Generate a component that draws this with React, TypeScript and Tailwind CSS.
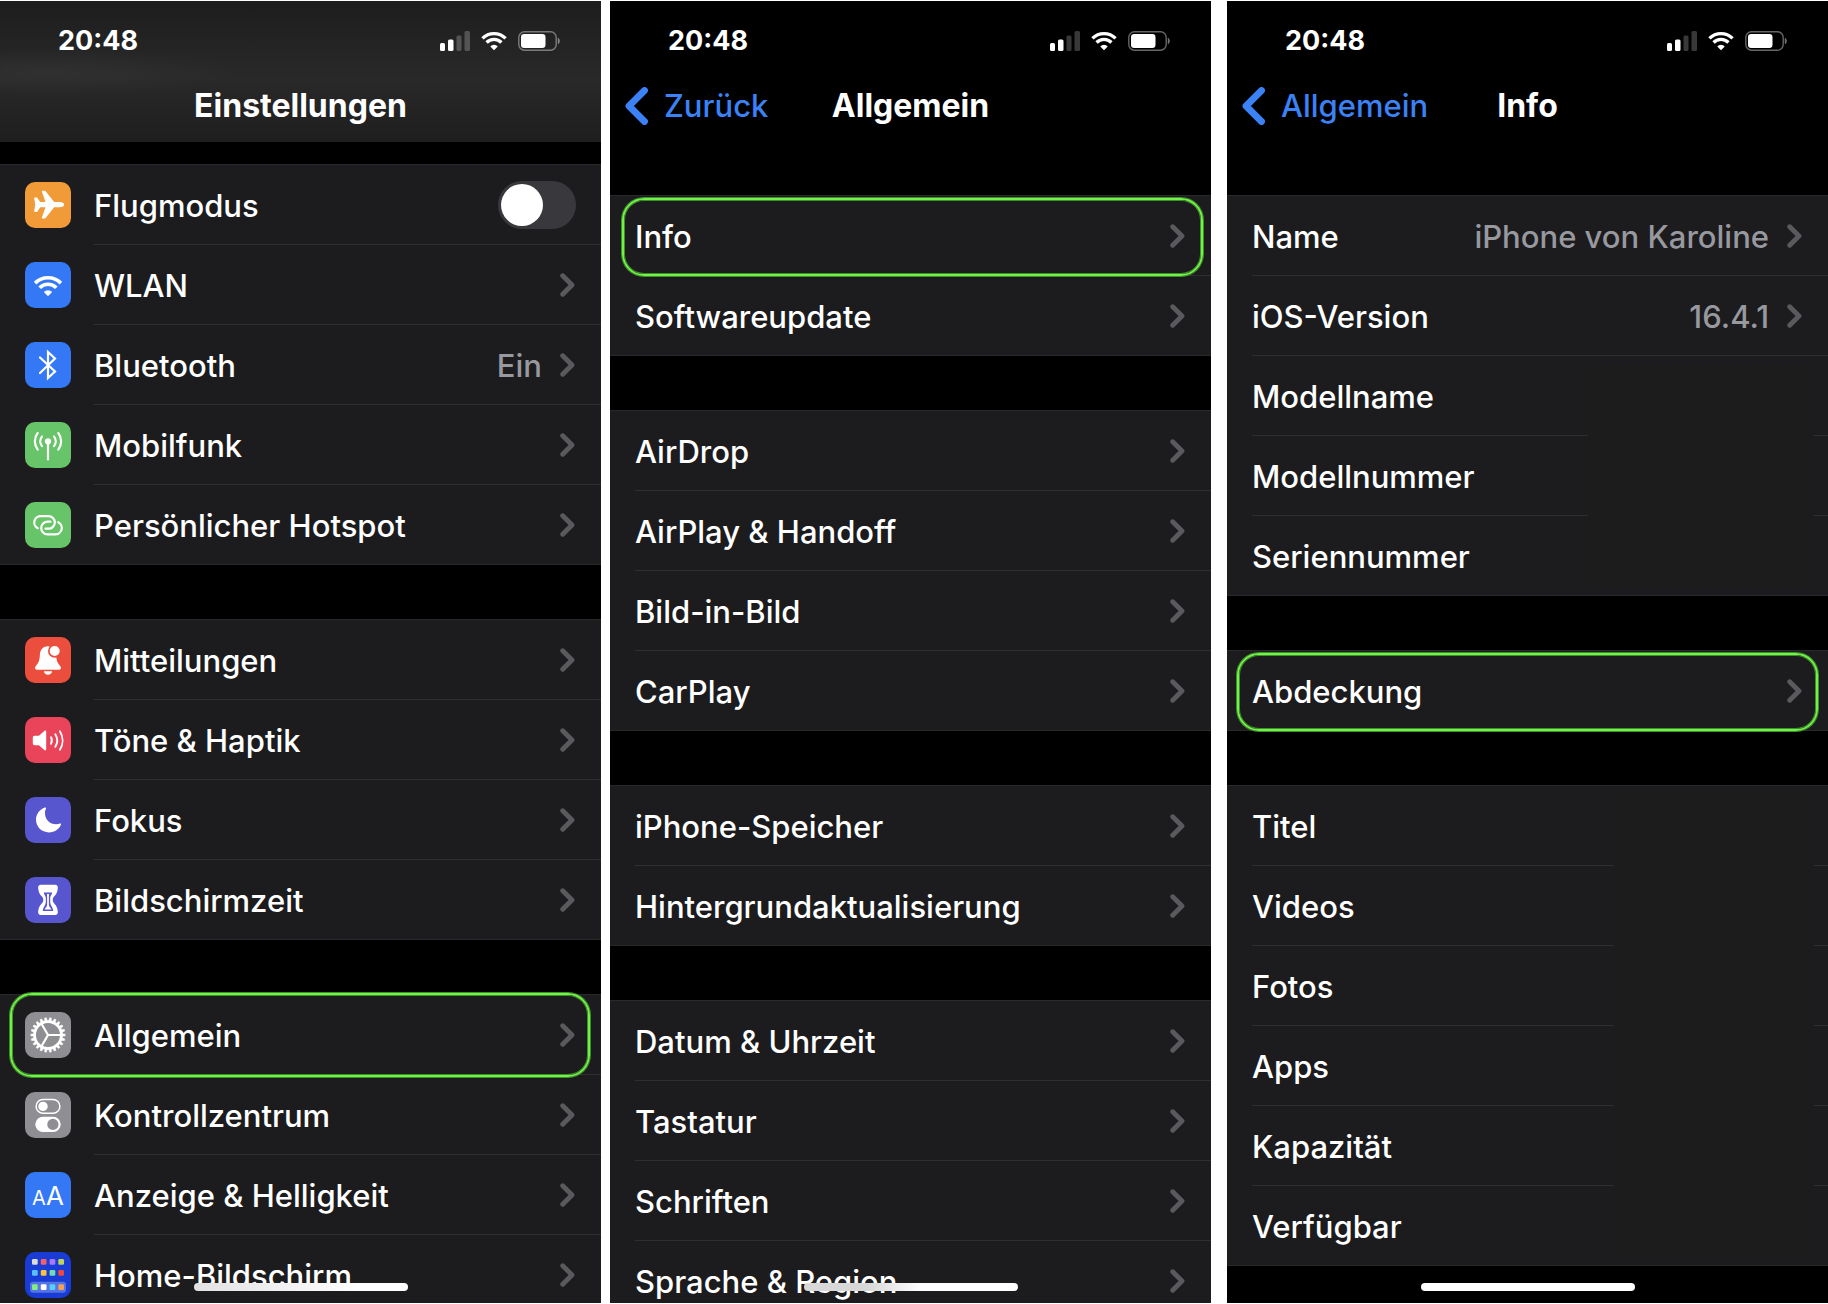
import type { ReactNode } from "react";

type RowData = {
  label: string;
  value?: string;
  icon?: ReactNode;
  toggle?: boolean;
  plain?: boolean;
  highlight?: string;
};

function Tile({ bg, children }: { bg: string; children: ReactNode }) {
  return (
    <svg viewBox="0 0 46 46" className={`size-[46px] shrink-0 rounded-[10px] ${bg}`} aria-hidden="true">
      {children}
    </svg>
  );
}

function WifiShape() {
  return (
    <g>
      <g fill="none" stroke="#fff" strokeWidth="3.7">
        <path d="M10.1 21.1a18.2 18.2 0 0 1 25.8 0" />
        <path d="M14.7 25.7a11.7 11.7 0 0 1 16.6 0" />
      </g>
      <path d="M23 34.3l-4.2-4.3a6 6 0 0 1 8.4 0z" fill="#fff" />
    </g>
  );
}

const planeIcon = (
  <Tile bg="bg-[#f19b38]">
    <path
      fill="#fff"
      d="M39.2 22.6c0 1.8-2 2.7-4.4 2.7h-5.6L20.6 36c-.4.5-.8.6-1.3.6h-1.7c-.6 0-.9-.5-.7-1.1l3.6-10.2h-5.2l-2.9 4.1c-.3.4-.6.5-1 .5h-1.5c-.5 0-.8-.4-.7-.9l1-6.4-1-6.3c-.1-.5.2-.9.7-.9h1.5c.4 0 .7.1 1 .5l2.9 4h5.2L16.9 9.8c-.2-.6.1-1.1.7-1.1h1.7c.5 0 .9.1 1.300.6l8.600 10.600h5.600c2.400 0 4.400.900 4.400 2.700z"
    />
  </Tile>
);

const wifiIcon = (
  <Tile bg="bg-[#3478f6]">
    <WifiShape />
  </Tile>
);

const bluetoothIcon = (
  <Tile bg="bg-[#3478f6]">
    <path
      d="M15 15.500L30 29.500L23 36V10L30 16.500L15 31"
      fill="none"
      stroke="#fff"
      strokeWidth="2.200"
      strokeLinejoin="miter"
      strokeLinecap="round"
    />
  </Tile>
);

const cellularIcon = (
  <Tile bg="bg-[#67c468]">
    <circle cx="23" cy="19.300" r="3.100" fill="#fff" />
    <g fill="none" stroke="#fff" strokeWidth="2.200" strokeLinecap="round">
      <path d="M23 20v17.500" />
      <path d="M17 14.500a7.500 7.500 0 0 0 0 9.600M29 14.500a7.500 7.500 0 0 1 0 9.600" />
      <path d="M12.700 11a13.500 13.500 0 0 0 0 16.600M33.300 11a13.500 13.500 0 0 1 0 16.600" />
    </g>
  </Tile>
);

const hotspotIcon = (
  <Tile bg="bg-[#67c468]">
    <g fill="none" stroke="#fff" strokeWidth="2.200" strokeLinecap="round">
      <path d="M12.800 26.200A6.400 6.400 0 0 1 16.300 14.100H23.500a6.300 6.300 0 0 1 0 12.600H20.500" />
      <path d="M33.200 20.200A6.400 6.400 0 0 1 29.700 32.300H22.500a6.300 6.300 0 0 1 0-12.600H25.500" />
    </g>
  </Tile>
);

const bellIcon = (
  <Tile bg="bg-[#eb4e3d]">
    <path
      fill="#fff"
      d="M23 9.200c-4.600 0-7.800 3.300-8.100 8.200-.3 5.600-1 7.600-3.300 10.500-1.100 1.400-1.600 2.200-1.600 3.200 0 1.100.8 1.700 2 1.700h22c1.200 0 2-.6 2-1.700 0-1-.5-1.800-1.600-3.200-2.300-2.900-3-4.900-3.300-10.500C30.800 12.500 27.600 9.200 23 9.200z"
    />
    <path fill="#fff" d="M18.800 34.300h8.400c-.4 2-2 3.500-4.200 3.500s-3.800-1.500-4.200-3.500z" />
    <circle cx="29.700" cy="14" r="6.700" fill="#eb4e3d" />
    <circle cx="29.700" cy="14" r="5" fill="#fff" />
  </Tile>
);

const speakerIcon = (
  <Tile bg="bg-[#ea445a]">
    <path
      fill="#fff"
      d="M7.800 20.700c0-1.200.7-1.900 1.900-1.900h3.600c.4 0 .6-.1.900-.3l5.100-4.400c1-.8 1.900-.6 1.900.6v17.600c0 1.200-.9 1.400-1.900.6l-5.100-4.400c-.3-.2-.5-.3-.9-.3H9.700c-1.200 0-1.900-.7-1.900-1.900z"
    />
    <g fill="none" stroke="#fff" strokeWidth="1.900" strokeLinecap="round">
      <path d="M26 20.300a6.500 6.500 0 0 1 0 6.400" />
      <path d="M30.300 17.200a12 12 0 0 1 0 12.600" />
      <path d="M34.900 14.200a17.500 17.500 0 0 1 0 18.600" />
    </g>
  </Tile>
);

const moonIcon = (
  <Tile bg="bg-[#5856ce]">
    <path
      fill="#fff"
      d="M20 10.600c.7-.5 1.300.1 1 .8-.8 1.700-1 3-1 4.600 0 6.700 4.600 11.200 11.300 11.200 1.500 0 2.500-.2 3.700-.6.700-.3 1.300.1 1 .9-1.800 4.700-6.600 7.900-12 7.900-7.500 0-13-5.500-13-12.800 0-5.300 3.500-10 9-12z"
    />
  </Tile>
);

const hourglassIcon = (
  <Tile bg="bg-[#5856ce]">
    <path
      fill="#fff"
      d="M15.800 7.800h14.400c1.600 0 2.600 1 2.600 2.500 0 5-2 7.500-4 9.500-1.500 1.500-1.500 4.700 0 6.200 2 2 4 4.500 4 9.500 0 1.500-1 2.500-2.600 2.500H15.800c-1.600 0-2.600-1-2.600-2.500 0-5 2-7.500 4-9.500 1.500-1.500 1.500-4.700 0-6.200-2-2-4-4.500-4-9.500 0-1.500 1-2.500 2.600-2.500z"
    />
    <path
      fill="#5856ce"
      d="M18.800 15.400h8.400c-.2 2.400-2 3-2 5.400V25c0 3.500 2.700 4.700 3 9H17.800c.3-4.300 3-5.500 3-9v-4.200c0-2.400-1.800-3-2-5.400z"
    />
    <path fill="#fff" d="M21.900 17h2.200c-.2 1.200-.2 2.200-.2 3.500V28c.1 1.800 1.700 2.400 2.500 4.500h-6.800c.8-2.100 2.400-2.700 2.500-4.500v-7.500c0-1.300 0-2.300-.2-3.500z" />
  </Tile>
);

const gearTeeth = Array.from({ length: 22 }, (_, i) => (i * 360) / 22);

const gearIcon = (
  <Tile bg="bg-[#8e8e93]">
    <circle cx="23" cy="23" r="13.400" fill="none" stroke="#fff" strokeWidth="2.700" />
    {gearTeeth.map((a) => (
      <path key={a} d="M37 21.700l3.200.5v1.600l-3.200.5z" fill="#fff" stroke="#fff" strokeWidth=".6" transform={`rotate(${a} 23 23)`} />
    ))}
    {[0, 120, 240].map((a) => (
      <path key={a} d="M23 23h13" stroke="#fff" strokeWidth="2.200" transform={`rotate(${a} 23 23)`} />
    ))}
  </Tile>
);

const controlIcon = (
  <Tile bg="bg-[#8e8e93]">
    <rect x="11.100" y="7.500" width="23.800" height="13.800" rx="6.900" fill="none" stroke="#fff" strokeWidth="1.500" />
    <circle cx="18" cy="14.400" r="4.700" fill="#fff" />
    <rect x="10.300" y="24.700" width="25.400" height="15.300" rx="7.650" fill="#fff" />
    <circle cx="27.900" cy="32.400" r="5.600" fill="#8e8e93" />
  </Tile>
);

const textSizeIcon = (
  <span
    className="flex size-[46px] shrink-0 items-baseline justify-center rounded-[10px] bg-[#3478f6] text-[26px] leading-[48px] font-normal text-white"
    aria-hidden="true"
  >
    <span className="text-[20px]">A</span>A
  </span>
);

const homeApps = [
  ["#dcdcd4", "#f4606a", "#a878f8", "#bcd654"],
  ["#58c0f8", "#fcc438", "#70dcb0", "#f04838"],
  ["#84ee80", "#ffffff", "#58d0fc", "#f8a050"],
];
const homeX = [7, 15.8, 24.6, 33.3];
const homeY = [7, 18, 32.3];

const homeIcon = (
  <Tile bg="bg-[#1a3cd6]">
    <rect x="5" y="29.700" width="36" height="11" rx="3" fill="#5674e4" />
    {homeApps.map((row, r) =>
      row.map((c, i) => <rect key={c} x={homeX[i]} y={homeY[r]} width="5.700" height="5.700" rx="1.300" fill={c} />),
    )}
  </Tile>
);

function Chevron() {
  return (
    <svg viewBox="0 0 15 24" className="h-6 w-[15px] shrink-0" aria-hidden="true">
      <path d="M2.700 2.700L12 12l-9.300 9.300" fill="none" stroke="#5a5a5e" strokeWidth="4.800" strokeLinecap="round" strokeLinejoin="round" />
    </svg>
  );
}

function StatusBar() {
  return (
    <div className="flex h-[69px] items-center justify-between pt-[11px] pr-[41px] pl-[58px]">
      <time className="text-[27px] leading-8 font-bold">20:48</time>
      <div className="flex items-center gap-[11px]">
        <svg viewBox="0 0 30 20" className="h-5 w-[30px]" aria-label="Mobilfunksignal">
          <rect x="0" y="12" width="5" height="8" rx="1.500" fill="#fff" />
          <rect x="8" y="8.500" width="5.500" height="11.500" rx="1.500" fill="#fff" />
          <rect x="16.500" y="4.500" width="5" height="15.500" rx="1.500" fill="#fff" fillOpacity=".22" />
          <rect x="24.500" y="0" width="5.500" height="20" rx="1.500" fill="#fff" fillOpacity=".22" />
        </svg>
        <svg viewBox="8.500 13.500 29 21" className="h-5 w-[26px]" aria-label="WLAN">
          <WifiShape />
        </svg>
        <svg viewBox="0 0 42 20" className="h-5 w-[42px]" aria-label="Batterie">
          <rect x=".8" y=".8" width="37.400" height="18.400" rx="5.600" fill="none" stroke="#fff" strokeOpacity=".4" strokeWidth="1.400" />
          <rect x="3" y="3" width="24.500" height="14" rx="3.200" fill="#fff" />
          <path d="M39.800 6.700c1.200.5 2 1.700 2 3.300s-.8 2.800-2 3.300z" fill="#fff" fillOpacity=".45" />
        </svg>
      </div>
    </div>
  );
}

function Row({ row, last }: { row: RowData; last: boolean }) {
  const inner = (
    <>
      {row.icon && <span className="mr-[23px] shrink-0">{row.icon}</span>}
      <span
        className={`flex flex-1 items-center self-stretch ${row.toggle ? "pr-[25px]" : "pr-[26px]"} ${last ? "" : "border-b border-[#2f2f31]"}`}
      >
        <span className="flex-1 pt-0.5 whitespace-nowrap">{row.label}</span>
        {row.value && <span className="mr-[18px] pt-0.5 whitespace-nowrap text-[#98989f]">{row.value}</span>}
        {row.toggle && (
          <span className="relative flex">
            <input
              type="checkbox"
              role="switch"
              className="peer h-12 w-[78px] appearance-none rounded-full bg-[#39393d] checked:bg-[#67c468]"
            />
            <span className="pointer-events-none absolute top-[3px] left-[3px] size-[42px] rounded-full bg-white peer-checked:left-[33px]" />
          </span>
        )}
        {!row.toggle && !row.plain && <Chevron />}
      </span>
    </>
  );
  const cls = "flex h-full items-center pl-[25px]";
  return (
    <li className={`relative h-20 ${last ? "border-b border-[#29292b]" : ""}`}>
      {row.toggle ? (
        <label className={cls}>{inner}</label>
      ) : row.plain ? (
        <div className={cls}>{inner}</div>
      ) : (
        <a href="#" className={cls}>
          {inner}
        </a>
      )}
      {row.highlight && (
        <span
          className={`pointer-events-none absolute z-10 rounded-[22px] border-2 border-[#70f346] shadow-[0_0_0_1px_#3f8f2c,inset_0_0_0_1px_#3f8f2c] ${row.highlight}`}
        />
      )}
    </li>
  );
}

function Group({ rows, cover }: { rows: RowData[]; cover?: string }) {
  return (
    <ul className="relative border-t border-[#29292b] bg-[#1c1c1e]">
      {rows.map((row, i) => (
        <Row key={row.label} row={row} last={i === rows.length - 1} />
      ))}
      {cover && <li aria-hidden="true" className={`absolute right-[14px] bottom-2 rounded-md bg-[#1c1c1c] ${cover}`} />}
    </ul>
  );
}

function Phone({
  title,
  back,
  className,
  indicator,
  children,
}: {
  title: string;
  back?: string;
  className: string;
  indicator: string;
  children: ReactNode;
}) {
  return (
    <section className={`relative min-w-0 flex-1 overflow-hidden bg-black ${className}`}>
      <header
        className={
          back
            ? "mb-[53px]"
            : "mb-[22px] bg-[radial-gradient(ellipse_at_8%_50%,#ffffff0a_0%,transparent_25%),linear-gradient(#1d1d1d,#29292a_55%,#1e1e1e)]"
        }
      >
        <StatusBar />
        <div className="relative flex h-[72px] items-start justify-center">
          {back && (
            <a href="#" className="absolute top-[17px] left-[15px] flex items-center gap-4 leading-[38px] text-[#3b82f7]">
              <svg viewBox="0 0 23 38" className="h-[38px] w-[23px]" aria-hidden="true">
                <path d="M19.500 3.500L4 19l15.500 15.500" fill="none" stroke="currentColor" strokeWidth="6.800" strokeLinecap="round" strokeLinejoin="round" />
              </svg>
              {back}
            </a>
          )}
          <h1 className="mt-[17px] text-[32px] leading-[38px] font-bold">{title}</h1>
        </div>
      </header>
      <div className="flex flex-col gap-[54px]">{children}</div>
      <div className={`absolute bottom-3 left-1/2 h-2 w-[214px] -translate-x-1/2 rounded-full ${indicator}`} />
    </section>
  );
}

export default function App() {
  return (
    <main className="flex h-screen bg-white pt-px pb-px font-['Inter',sans-serif] text-[31px] leading-[38px] font-medium text-white">
      <Phone title="Einstellungen" className="" indicator="bg-linear-to-r from-[#e2e2e2] to-white to-80%">
        <Group
          rows={[
            { label: "Flugmodus", icon: planeIcon, toggle: true },
            { label: "WLAN", icon: wifiIcon },
            { label: "Bluetooth", icon: bluetoothIcon, value: "Ein" },
            { label: "Mobilfunk", icon: cellularIcon },
            { label: "Persönlicher Hotspot", icon: hotspotIcon },
          ]}
        />
        <Group
          rows={[
            { label: "Mitteilungen", icon: bellIcon },
            { label: "Töne & Haptik", icon: speakerIcon },
            { label: "Fokus", icon: moonIcon },
            { label: "Bildschirmzeit", icon: hourglassIcon },
          ]}
        />
        <Group
          rows={[
            { label: "Allgemein", icon: gearIcon, highlight: "-top-0.5 -bottom-0.5 left-[10px] right-[11px]" },
            { label: "Kontrollzentrum", icon: controlIcon },
            { label: "Anzeige & Helligkeit", icon: textSizeIcon },
            { label: "Home-Bildschirm", icon: homeIcon },
          ]}
        />
      </Phone>
      <Phone
        title="Allgemein"
        back="Zurück"
        className="ml-[9px]"
        indicator="bg-linear-to-r from-[#d8d8d8] from-30% to-white to-55%"
      >
        <Group
          rows={[
            { label: "Info", highlight: "top-[2px] bottom-0 left-3 right-2" },
            { label: "Softwareupdate" },
          ]}
        />
        <Group
          rows={[
            { label: "AirDrop" },
            { label: "AirPlay & Handoff" },
            { label: "Bild-in-Bild" },
            { label: "CarPlay" },
          ]}
        />
        <Group rows={[{ label: "iPhone-Speicher" }, { label: "Hintergrundaktualisierung" }]} />
        <Group
          rows={[
            { label: "Datum & Uhrzeit" },
            { label: "Tastatur" },
            { label: "Schriften" },
            { label: "Sprache & Region" },
          ]}
        />
      </Phone>
      <Phone title="Info" back="Allgemein" className="ml-4" indicator="bg-white">
        <Group
          cover="top-[168px] w-[226px]"
          rows={[
            { label: "Name", value: "iPhone von Karoline" },
            { label: "iOS-Version", value: "16.4.1" },
            { label: "Modellname", plain: true },
            { label: "Modellnummer", plain: true },
            { label: "Seriennummer", plain: true },
          ]}
        />
        <Group rows={[{ label: "Abdeckung", highlight: "top-[2px] -bottom-px left-[10px] right-[10px]" }]} />
        <Group
          cover="top-2 w-[200px]"
          rows={[
            { label: "Titel", plain: true },
            { label: "Videos", plain: true },
            { label: "Fotos", plain: true },
            { label: "Apps", plain: true },
            { label: "Kapazität", plain: true },
            { label: "Verfügbar", plain: true },
          ]}
        />
      </Phone>
    </main>
  );
}
